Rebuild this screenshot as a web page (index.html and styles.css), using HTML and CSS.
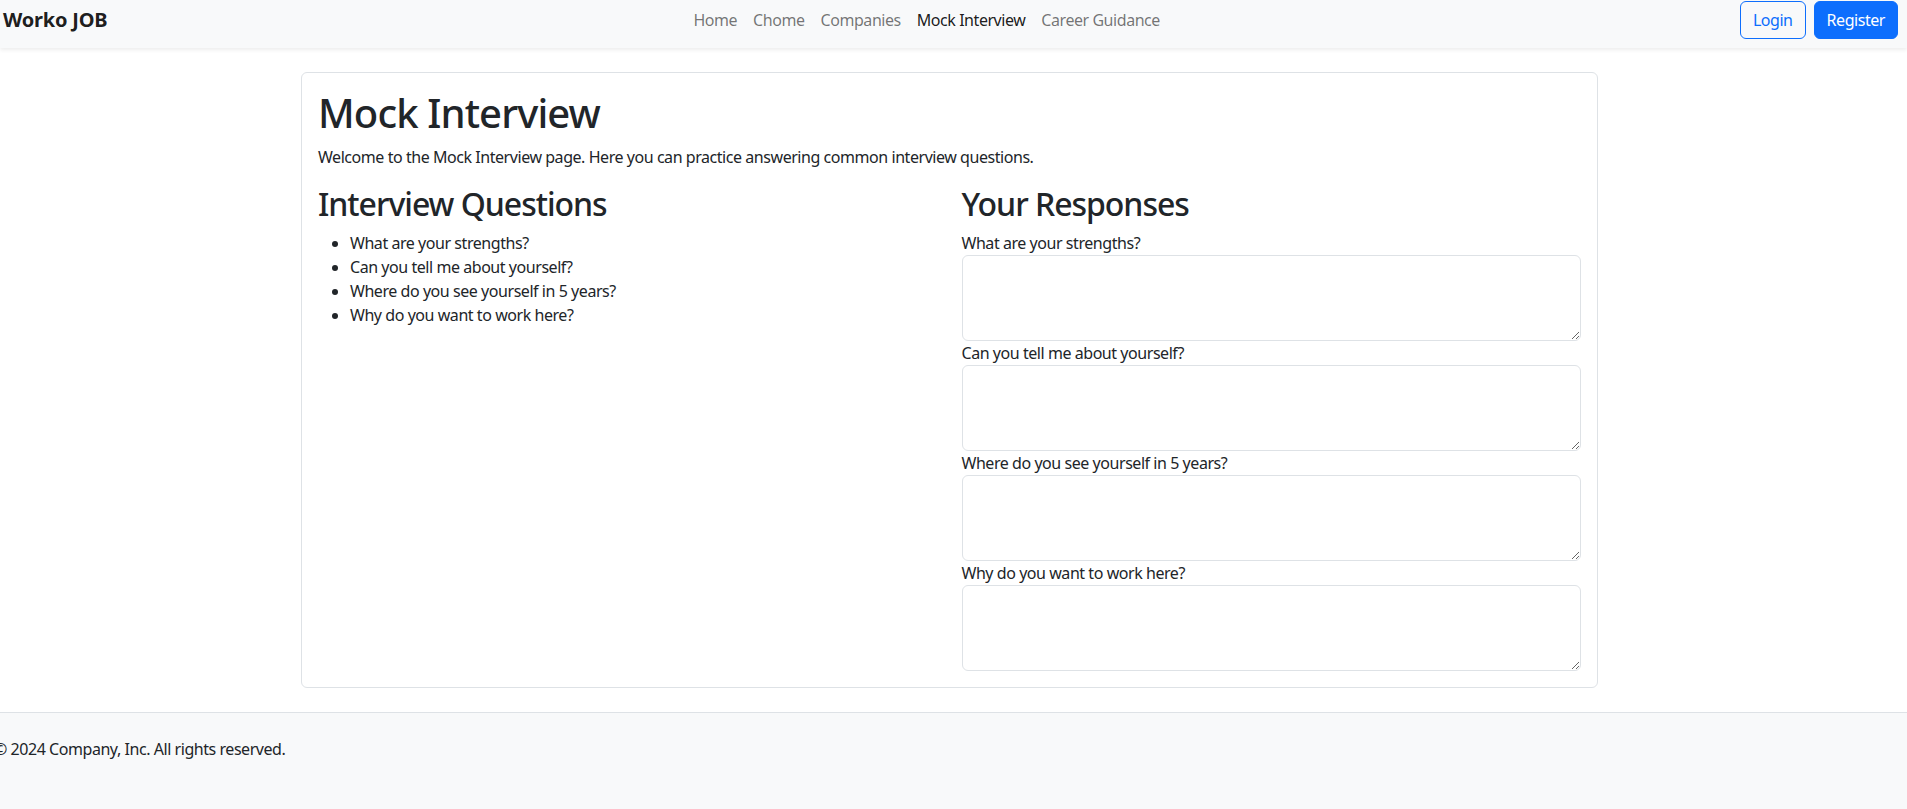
FILE: index.html
```html
<!DOCTYPE html>
<html lang="en">
<head>
<meta charset="utf-8">
<title>Mock Interview - Worko JOB</title>
<link rel="stylesheet" href="styles.css">
</head>
<body>
<header class="navbar">
  <a class="brand" href="#">Worko JOB</a>
  <nav class="nav">
    <a class="nav-link" href="#">Home</a>
    <a class="nav-link" href="#">Chome</a>
    <a class="nav-link" href="#">Companies</a>
    <a class="nav-link active" href="#">Mock Interview</a>
    <a class="nav-link" href="#">Career Guidance</a>
  </nav>
  <div class="auth">
    <a class="btn btn-outline" href="#">Login</a>
    <a class="btn btn-primary" href="#">Register</a>
  </div>
</header>

<main class="main">
  <div class="card">
    <h1>Mock Interview</h1>
    <p class="lead-text">Welcome to the Mock Interview page. Here you can practice answering common interview questions.</p>
    <div class="row">
      <section class="col">
        <h2>Interview Questions</h2>
        <ul class="questions">
          <li>What are your strengths?</li>
          <li>Can you tell me about yourself?</li>
          <li>Where do you see yourself in 5 years?</li>
          <li>Why do you want to work here?</li>
        </ul>
      </section>
      <section class="col">
        <h2>Your Responses</h2>
        <form class="responses">
          <label for="q1">What are your strengths?</label>
          <textarea id="q1" rows="3"></textarea>
          <label for="q2">Can you tell me about yourself?</label>
          <textarea id="q2" rows="3"></textarea>
          <label for="q3">Where do you see yourself in 5 years?</label>
          <textarea id="q3" rows="3"></textarea>
          <label for="q4">Why do you want to work here?</label>
          <textarea id="q4" rows="3"></textarea>
        </form>
      </section>
    </div>
  </div>
</main>

<footer class="footer">
  <p>© 2024 Company, Inc. All rights reserved.</p>
</footer>
</body>
</html>
```

FILE: styles.css
```css
* { box-sizing: border-box; }

html, body {
  margin: 0;
  background: #fff;
}

body {
  font-family: "Noto Sans", "Open Sans", "Liberation Sans", sans-serif;
  font-size: 16px;
  line-height: 1.5;
  letter-spacing: -0.028em;
  color: #212529;
  min-height: 809px;
  display: flex;
  flex-direction: column;
}

a { text-decoration: none; }

/* Navbar */
.navbar {
  display: flex;
  align-items: flex-start;
  height: 48px;
  padding: 0 9px 0 3px;
  background: #f8f9fa;
  box-shadow: 0 2px 4px rgba(0, 0, 0, 0.075);
  position: relative;
  z-index: 1;
}

.brand {
  padding-top: 5px;
  font-size: 20px;
  line-height: 30px;
  font-weight: 700;
  letter-spacing: -0.01em;
  color: rgba(0, 0, 0, 0.9);
}

.nav {
  flex: 1;
  display: flex;
  justify-content: center;
  padding-left: 6px;
}

.nav-link {
  padding: 8px 8px;
  line-height: 24px;
  color: rgba(0, 0, 0, 0.55);
}

.nav-link.active { color: rgba(0, 0, 0, 0.9); }

.auth {
  display: flex;
  gap: 8px;
  margin-top: 1px;
}

.btn {
  display: inline-block;
  padding: 6px 12px;
  border: 1px solid #0d6efd;
  border-radius: 6px;
  line-height: 24px;
  font-size: 16px;
}

.btn-outline { color: #0d6efd; background: transparent; }
.btn-primary { color: #fff; background: #0d6efd; }

/* Main */
.main {
  padding: 24px 8px 0 0;
}

.card {
  width: 1297px;
  margin: 0 auto;
  padding: 16px;
  border: 1px solid #dee2e6;
  border-radius: 6px;
}

h1, h2 {
  margin: 0 0 8px;
  font-weight: 500;
  line-height: 1.2;
  letter-spacing: -0.022em;
}

h1 { font-size: 40px; }
h2 { font-size: 32px; letter-spacing: -0.032em; }

.lead-text { margin: 0 0 16px; }

.row {
  display: grid;
  grid-template-columns: 1fr 1fr;
  column-gap: 24px;
}

.questions {
  margin: 0;
  padding-left: 32px;
}

.responses {
  display: flex;
  flex-direction: column;
}

.responses label { display: block; }

.responses textarea {
  display: block;
  width: 100%;
  height: 86px;
  padding: 6px 12px;
  border: 1px solid #dee2e6;
  border-radius: 6px;
  font: inherit;
  resize: vertical;
  background: #fff;
}

/* Footer */
.footer {
  flex: 1;
  margin-top: 24px;
  padding: 24px 0;
  background: #f8f9fa;
  border-top: 1px solid #dee2e6;
}

.footer p {
  margin: 0 0 16px -6px;
}
```
